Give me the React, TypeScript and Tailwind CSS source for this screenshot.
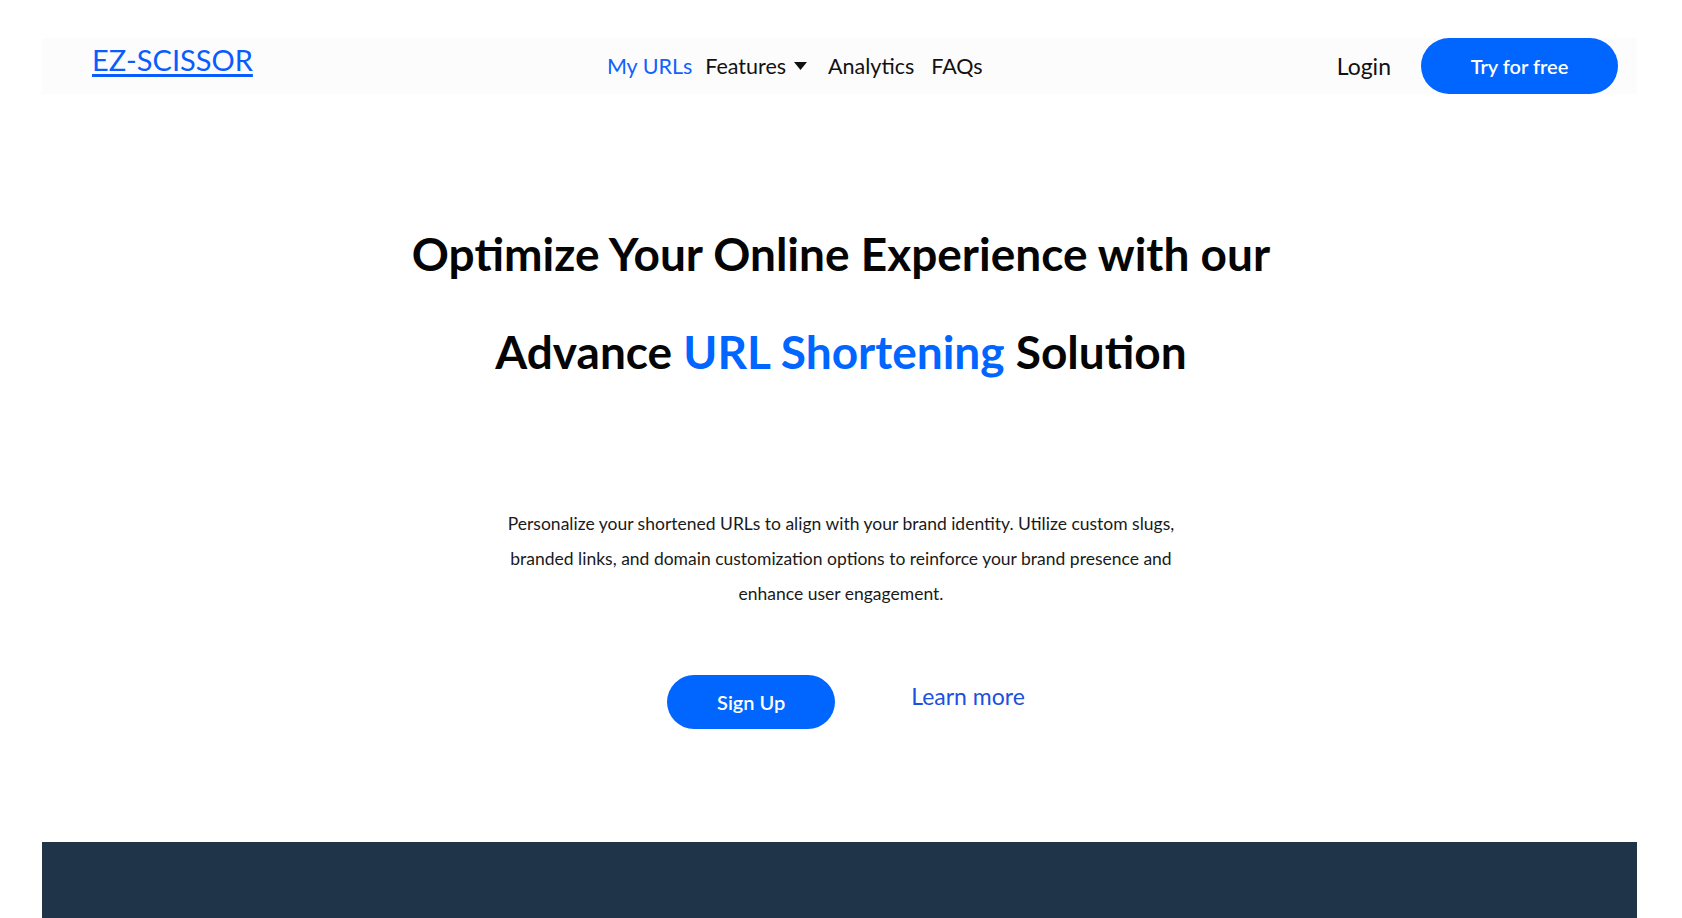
import React from "react";

export default function App() {
  return (
    <div className="min-h-screen bg-white font-['Lato','Noto_Sans',sans-serif] text-black">
      <header className="ml-[42px] mr-[45px] mt-[38px] h-[56px] bg-[#fcfcfc] flex items-center justify-between pl-[50px] pr-[19px]">
        <a href="#" className="text-[29px] leading-none text-[#0a5cff] underline underline-offset-[3px] decoration-[3px] mb-[14px]">
          EZ-SCISSOR
        </a>
        <nav className="flex items-center text-[21.5px] text-[#111]">
          <a href="#" className="text-[#0f62fe]">My URLs</a>
          <a href="#" className="ml-[13px] flex items-center gap-[7px]">
            Features
            <svg width="15" height="10" viewBox="0 0 15 10"><path d="M1 1h13L7.5 9z" fill="#111" /></svg>
          </a>
          <a href="#" className="ml-[20px]">Analytics</a>
          <a href="#" className="ml-[17px]">FAQs</a>
        </nav>
        <div className="flex items-center gap-[30px]">
          <a href="#" className="text-[23px] text-[#111]">Login</a>
          <button className="w-[197px] h-[56px] rounded-full bg-[#0066ff] text-white text-[20px] font-semibold">
            Try for free
          </button>
        </div>
      </header>

      <section className="text-center mt-[111px]">
        <h1 className="text-[46px] font-bold leading-[98px] text-[#050505]">
          Optimize Your Online Experience with our
          <br />
          Advance <span className="text-[#0066ff]">URL Shortening</span> Solution
        </h1>
        <p className="mt-[105px] mx-auto max-w-[684px] text-[17.5px] leading-[35px] text-[#1a1a1a]">
          Personalize your shortened URLs to align with your brand identity. Utilize custom slugs, branded links, and domain customization options to reinforce your brand presence and enhance user engagement.
        </p>
        <div className="mt-[64px] flex justify-center items-start gap-[76px] pl-[10px]">
          <button className="w-[168px] h-[54px] rounded-full bg-[#0066ff] text-white text-[20px] font-semibold">
            Sign Up
          </button>
          <a href="#" className="mt-[6px] text-[23px] text-[#1d4fe0] leading-[30px]">Learn more</a>
        </div>
      </section>

      <div className="ml-[42px] mr-[45px] mt-[113px] h-[120px] bg-[#1f3449]" />
    </div>
  );
}
